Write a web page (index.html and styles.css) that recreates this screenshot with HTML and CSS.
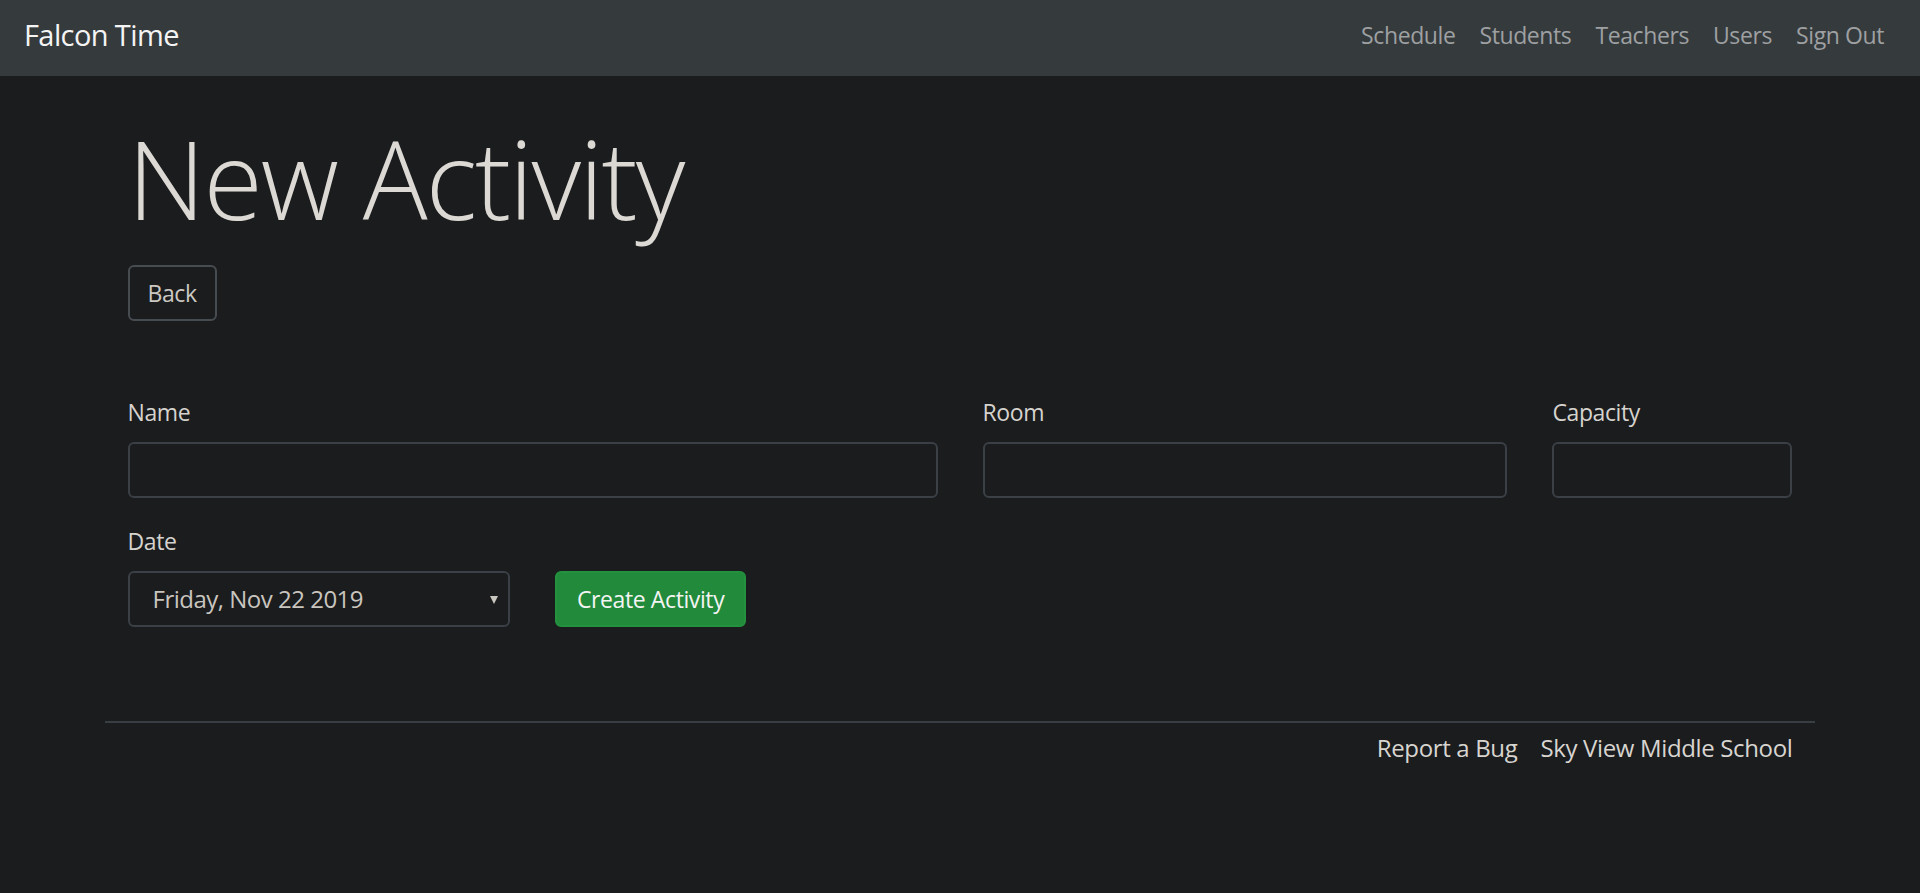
FILE: index.html
```html
<!DOCTYPE html>
<html lang="en">
<head>
<meta charset="utf-8">
<title>New Activity - Falcon Time</title>
<link rel="stylesheet" href="styles.css">
</head>
<body>
<nav class="navbar">
  <a class="brand" href="#">Falcon Time</a>
  <ul class="nav-links">
    <li><a href="#">Schedule</a></li>
    <li><a href="#">Students</a></li>
    <li><a href="#">Teachers</a></li>
    <li><a href="#">Users</a></li>
    <li><a href="#">Sign Out</a></li>
  </ul>
</nav>
<main class="container">
  <h1 class="title">New Activity</h1>
  <a class="btn btn-outline" href="#">Back</a>
  <form class="form">
    <div class="row">
      <div class="group col-6">
        <label class="label">Name</label>
        <input class="control" type="text">
      </div>
      <div class="group col-4">
        <label class="label">Room</label>
        <input class="control" type="text">
      </div>
      <div class="group col-2">
        <label class="label">Capacity</label>
        <input class="control" type="text">
      </div>
    </div>
    <div class="row row-end">
      <div class="group col-3">
        <label class="label">Date</label>
        <div class="control select">
          <span class="select-text">Friday, Nov 22 2019</span>
          <svg class="caret" width="8" height="8" viewBox="0 0 8 8"><path d="M0 0 H8 L4 8 Z" fill="#c9c5bf"/></svg>
        </div>
      </div>
      <div class="group col-auto">
        <button class="btn btn-success" type="button">Create Activity</button>
      </div>
    </div>
  </form>
</main>
<footer class="footer">
  <div class="footer-links">
    <a href="#">Report a Bug</a>
    <a href="#">Sky View Middle School</a>
  </div>
</footer>
</body>
</html>
```

FILE: styles.css
```css
* { box-sizing: border-box; }

html, body {
  margin: 0;
  padding: 0;
}

body {
  background: #1b1c1e;
  color: #d8d5d0;
  font-family: "Open Sans", "Noto Sans", sans-serif;
  font-size: 23px;
  letter-spacing: -0.4px;
  line-height: 36px;
  min-height: 893px;
}

a { text-decoration: none; color: inherit; }

.navbar {
  height: 76px;
  background: #353a3d;
  display: flex;
  align-items: flex-start;
  justify-content: space-between;
  padding: 0 24px;
}

.brand {
  color: #f4f4f4;
  font-size: 29px;
  letter-spacing: -0.6px;
  line-height: 45px;
  margin-top: 12px;
}

.nav-links {
  list-style: none;
  margin: 17px 0 0;
  padding: 0;
  display: flex;
}

.nav-links a {
  display: block;
  padding: 0 12px;
  color: #9ea0a2;
  line-height: 36px;
}

.container {
  width: 1710px;
  margin: 0 auto;
  padding: 38px 22.5px 0;
}

.title {
  margin: 0 0 21px;
  font-size: 108px;
  font-weight: 300;
  letter-spacing: -2px;
  line-height: 1.2;
  color: #dcd9d4;
}

.btn {
  display: inline-block;
  height: 56px;
  padding: 8px 18px;
  font-family: inherit;
  font-size: 23px;
  letter-spacing: -0.4px;
  line-height: 36px;
  border-radius: 6px;
  border: 2px solid transparent;
}

.btn-outline {
  color: #cbc8c3;
  border-color: #474c51;
}

.btn-success {
  padding: 8px 20px;
  background: #218b3b;
  border-color: #24913e;
  color: #f4f4f4;
}

.form {
  margin-top: 73px;
}

.row {
  display: flex;
  margin: 0 -22.5px;
}

.row-end {
  align-items: flex-end;
}

.group {
  padding: 0 22.5px;
  margin-bottom: 24px;
  display: flex;
  flex-direction: column;
}

.row + .row {
  margin-top: 1px;
}

.col-6 { width: 50%; }
.col-4 { width: 33.3333%; }
.col-3 { width: 25%; }
.col-2 { width: 16.6667%; }
.col-auto { width: auto; }

.label {
  display: block;
  margin-bottom: 12px;
  color: #d6d3ce;
}

.control {
  display: block;
  width: 100%;
  height: 56px;
  background: #1b1c1e;
  border: 2px solid #3a4045;
  border-radius: 6px;
  color: #c9c5bf;
  font-family: inherit;
  font-size: 23px;
  letter-spacing: -0.4px;
  padding: 8px 18px;
}

.select {
  display: flex;
  align-items: center;
  padding: 0 10px 0 23px;
  font-size: 24px;
  letter-spacing: -0.5px;
}

.select-text {
  flex: 1;
}

.caret {
  flex: none;
  margin-top: 2px;
}

.footer {
  width: 1710px;
  margin: 70px auto 0;
  border-top: 2px solid #383e43;
  padding-top: 7px;
}

.footer-links {
  display: flex;
  justify-content: flex-end;
  gap: 23px;
  padding: 0 22.5px;
  color: #d8d5d0;
  font-size: 24px;
  letter-spacing: -0.35px;
}
```
